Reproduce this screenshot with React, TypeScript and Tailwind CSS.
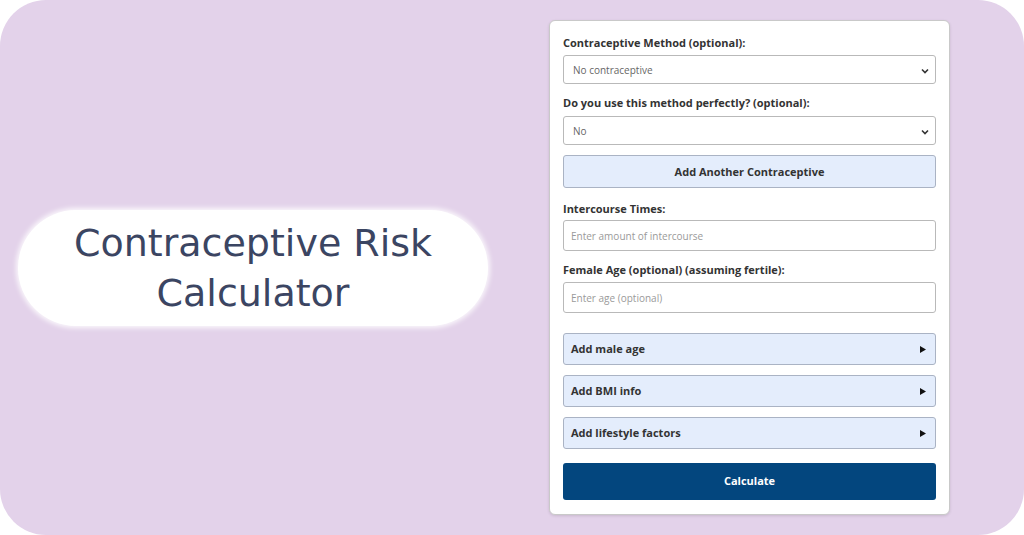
import React from "react";

const Chevron = () => (
  <svg width="8" height="6" viewBox="0 0 8 6" className="shrink-0">
    <path d="M1 1.5 L4 4.5 L7 1.5" fill="none" stroke="#333" strokeWidth="1.6" />
  </svg>
);

const Tri = () => (
  <svg width="6" height="7" viewBox="0 0 6 7" className="shrink-0">
    <path d="M0 0 L6 3.5 L0 7 Z" fill="#111" />
  </svg>
);

function Label({ children, mt }: { children: React.ReactNode; mt: string }) {
  return (
    <div className={`${mt} h-[16px] leading-[16px] text-[11px] font-bold text-[#333]`}>{children}</div>
  );
}

function Select({ value }: { value: string }) {
  return (
    <div className="h-[29px] border border-[#b9b9b9] rounded-[3px] bg-white flex items-center justify-between pl-[9px] pr-[6px] pt-[2px] text-[10px] text-[#666]">
      <span>{value}</span>
      <Chevron />
    </div>
  );
}

function Input({ placeholder }: { placeholder: string }) {
  return (
    <div className="h-[31px] border border-[#b9b9b9] rounded-[3px] bg-white flex items-center pl-[7px] pt-[1px] text-[10px] text-[#9a9a9a]">
      {placeholder}
    </div>
  );
}

function Acc({ label, mt }: { label: string; mt: string }) {
  return (
    <div className={`${mt} h-[32px] border border-[#aab3c4] rounded-[3px] bg-[#e4edfc] flex items-center justify-between pl-[7px] pr-[9px] text-[11px] font-bold text-[#333]`}>
      <span>{label}</span>
      <Tri />
    </div>
  );
}

export default function App() {
  return (
    <div className="w-[1024px] h-[535px] bg-white overflow-hidden">
      <div className="w-[1024px] h-[535px] bg-[#e3d2ea] rounded-[46px] flex items-center pl-[18px]">
        <div className="w-[470px] h-[116px] rounded-full bg-white shadow-[0_0_5px_2px_rgba(255,255,255,0.85)] flex flex-col items-center justify-center text-[#3b4562] text-[38px] leading-[50px] pt-[1px]" style={{ fontFamily: '"DejaVu Sans", Verdana, sans-serif' }}>
          <div>Contraceptive Risk</div>
          <div>Calculator</div>
        </div>
        <div
          className="ml-[61px] self-start mt-[20px] w-[401px] h-[495px] bg-white border border-[#c9c9c9] rounded-[6px] shadow-[0_1px_3px_rgba(0,0,0,0.12)] px-[13px] pt-[14px] flex flex-col"
          style={{ fontFamily: '"Open Sans", "Noto Sans", sans-serif' }}
        >
          <Label mt="mt-0">Contraceptive Method (optional):</Label>
          <div className="mt-[4px]">
            <Select value="No contraceptive" />
          </div>
          <Label mt="mt-[11px]">Do you use this method perfectly? (optional):</Label>
          <div className="mt-[5px]">
            <Select value="No" />
          </div>
          <div className="mt-[10px] h-[33px] border border-[#aab3c4] rounded-[3px] bg-[#e4edfc] flex items-center justify-center pt-[1px] text-[11px] font-bold text-[#333]">
            Add Another Contraceptive
          </div>
          <Label mt="mt-[13px]">Intercourse Times:</Label>
          <div className="mt-[3px]">
            <Input placeholder="Enter amount of intercourse" />
          </div>
          <Label mt="mt-[11px]">Female Age (optional) (assuming fertile):</Label>
          <div className="mt-[4px]">
            <Input placeholder="Enter age (optional)" />
          </div>
          <Acc label="Add male age" mt="mt-[20px]" />
          <Acc label="Add BMI info" mt="mt-[10px]" />
          <Acc label="Add lifestyle factors" mt="mt-[10px]" />
          <div className="mt-[14px] h-[37px] rounded-[3px] bg-[#03467e] flex items-center justify-center text-[11px] font-bold text-white">
            Calculate
          </div>
        </div>
      </div>
    </div>
  );
}
